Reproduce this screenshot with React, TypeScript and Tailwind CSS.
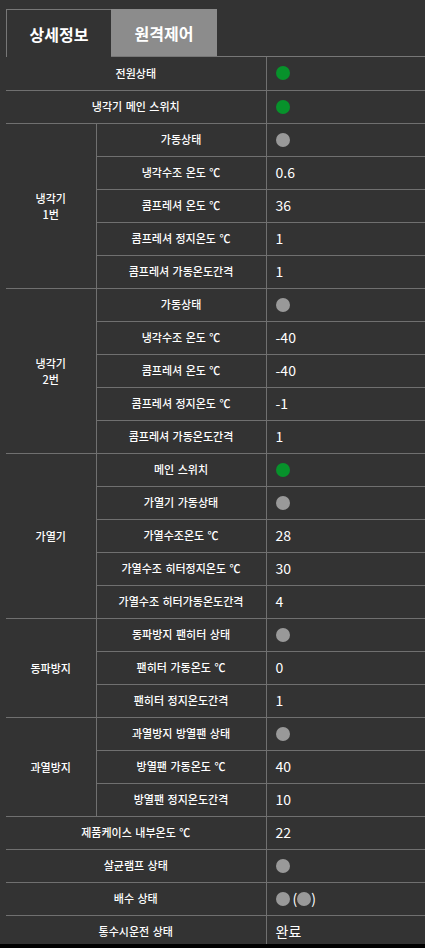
import React from "react";

type Value =
  | { kind: "dot"; color: "green" | "gray" }
  | { kind: "text"; text: string }
  | { kind: "pair" };

type Row = { label: string; value: Value };

type Block = { group?: string[]; rows: Row[] };

const green: Value = { kind: "dot", color: "green" };
const gray: Value = { kind: "dot", color: "gray" };
const t = (text: string): Value => ({ kind: "text", text });

const blocks: Block[] = [
  { rows: [{ label: "전원상태", value: green }] },
  { rows: [{ label: "냉각기 메인 스위치", value: green }] },
  {
    group: ["냉각기", "1번"],
    rows: [
      { label: "가동상태", value: gray },
      { label: "냉각수조 온도 ℃", value: t("0.6") },
      { label: "콤프레셔 온도 ℃", value: t("36") },
      { label: "콤프레셔 정지온도 ℃", value: t("1") },
      { label: "콤프레셔 가동온도간격", value: t("1") },
    ],
  },
  {
    group: ["냉각기", "2번"],
    rows: [
      { label: "가동상태", value: gray },
      { label: "냉각수조 온도 ℃", value: t("-40") },
      { label: "콤프레셔 온도 ℃", value: t("-40") },
      { label: "콤프레셔 정지온도 ℃", value: t("-1") },
      { label: "콤프레셔 가동온도간격", value: t("1") },
    ],
  },
  {
    group: ["가열기"],
    rows: [
      { label: "메인 스위치", value: green },
      { label: "가열기 가동상태", value: gray },
      { label: "가열수조온도 ℃", value: t("28") },
      { label: "가열수조 히터정지온도 ℃", value: t("30") },
      { label: "가열수조 히터가동온도간격", value: t("4") },
    ],
  },
  {
    group: ["동파방지"],
    rows: [
      { label: "동파방지 팬히터 상태", value: gray },
      { label: "팬히터 가동온도 ℃", value: t("0") },
      { label: "팬히터 정지온도간격", value: t("1") },
    ],
  },
  {
    group: ["과열방지"],
    rows: [
      { label: "과열방지 방열팬 상태", value: gray },
      { label: "방열팬 가동온도 ℃", value: t("40") },
      { label: "방열팬 정지온도간격", value: t("10") },
    ],
  },
  { rows: [{ label: "제품케이스 내부온도 ℃", value: t("22") }] },
  { rows: [{ label: "살균램프 상태", value: gray }] },
  { rows: [{ label: "배수 상태", value: { kind: "pair" } }] },
  { rows: [{ label: "통수시운전 상태", value: t("완료") }] },
];

function Dot({ color }: { color: "green" | "gray" }) {
  return (
    <span
      className={`inline-block h-[14px] w-[14px] rounded-full align-middle ${
        color === "green" ? "bg-[#07922b]" : "bg-[#999999]"
      }`}
    />
  );
}

function ValueCell({ value }: { value: Value }) {
  return (
    <td className="border-b border-[#707070] pl-[9px] text-left align-middle font-normal">
      {value.kind === "dot" && (
        <span className="flex items-center">
          <Dot color={value.color} />
        </span>
      )}
      {value.kind === "text" && (
        <span className="text-[14px] text-white">{value.text}</span>
      )}
      {value.kind === "pair" && (
        <span className="flex items-center text-[14px] text-white">
          <Dot color="gray" />
          <span className="ml-[3px]">(</span>
          <Dot color="gray" />
          <span>)</span>
        </span>
      )}
    </td>
  );
}

export default function App() {
  return (
    <div
      className="h-[948px] w-full overflow-hidden bg-black"
      style={{ fontFamily: '"Noto Sans CJK KR", "Noto Sans", sans-serif' }}
    >
      <div className="h-[944px] overflow-hidden bg-[#333333] pl-[6px] pt-[9px]">
        <div className="flex h-[48px]">
          <div className="flex w-[105px] items-center justify-center border-l border-t border-[#777777] text-[16px] font-bold text-white">
            상세정보
          </div>
          <div className="flex w-[106px] items-center justify-center border-b border-[#777777] bg-[#8c8c8c] text-[16px] font-bold text-white">
            원격제어
          </div>
          <div className="flex-1 border-b border-[#777777]" />
        </div>
        <table className="w-[430px] table-fixed border-collapse text-[11px] font-medium text-white">
          <colgroup>
            <col className="w-[90px]" />
            <col className="w-[170px]" />
            <col />
          </colgroup>
          <tbody>
            {blocks.flatMap((block, bi) =>
              block.rows.map((row, ri) => (
                <tr key={`${bi}-${ri}`} className="h-[33px]">
                  {block.group && ri === 0 && (
                    <td
                      rowSpan={block.rows.length}
                      className="border-b border-r border-[#707070] text-center align-middle leading-[16px]"
                    >
                      {block.group.map((line) => (
                        <div key={line}>{line}</div>
                      ))}
                    </td>
                  )}
                  <td
                    colSpan={block.group ? 1 : 2}
                    className="border-b border-r border-[#707070] text-center align-middle [word-spacing:1px]"
                  >
                    {row.label}
                  </td>
                  <ValueCell value={row.value} />
                </tr>
              ))
            )}
          </tbody>
        </table>
      </div>
    </div>
  );
}
